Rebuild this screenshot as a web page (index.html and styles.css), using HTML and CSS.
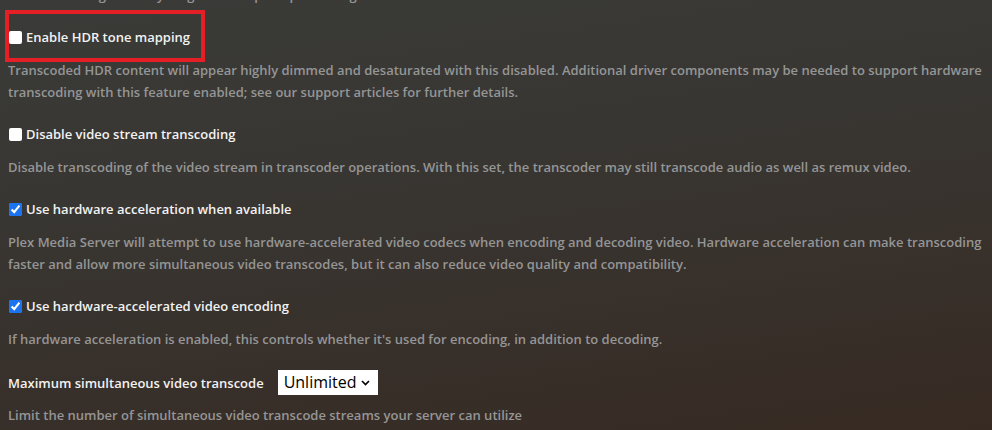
FILE: index.html
```html
<!DOCTYPE html>
<html lang="en">
<head>
<meta charset="utf-8">
<title>Transcoder settings</title>
<link rel="stylesheet" href="styles.css">
</head>
<body>
<div class="page">
  <p class="desc first">but will take significantly longer to complete processing.</p>

  <div class="setting">
    <div class="label-row highlighted">
      <input type="checkbox" id="hdr">
      <label for="hdr">Enable HDR tone mapping</label>
      <span class="annot"></span>
    </div>
    <p class="desc">Transcoded HDR content will appear highly dimmed and desaturated with this disabled. Additional driver components may be needed to support hardware transcoding with this feature enabled; see our support articles for further details.</p>
  </div>

  <div class="setting">
    <div class="label-row">
      <input type="checkbox" id="dvst">
      <label for="dvst">Disable video stream transcoding</label>
    </div>
    <p class="desc">Disable transcoding of the video stream in transcoder operations. With this set, the transcoder may still transcode audio as well as remux video.</p>
  </div>

  <div class="setting">
    <div class="label-row">
      <input type="checkbox" id="hwa" checked>
      <label for="hwa">Use hardware acceleration when available</label>
    </div>
    <p class="desc">Plex Media Server will attempt to use hardware-accelerated video codecs when encoding and decoding video. Hardware acceleration can make transcoding faster and allow more simultaneous video transcodes, but it can also reduce video quality and compatibility.</p>
  </div>

  <div class="setting">
    <div class="label-row">
      <input type="checkbox" id="hwe" checked>
      <label for="hwe">Use hardware-accelerated video encoding</label>
    </div>
    <p class="desc">If hardware acceleration is enabled, this controls whether it's used for encoding, in addition to decoding.</p>
  </div>

  <div class="setting">
    <div class="label-row select-row">
      <label class="plain" for="max">Maximum simultaneous video transcode</label>
      <span class="select-wrap">
        <select id="max">
          <option>Unlimited</option>
          <option>1</option>
          <option>2</option>
        </select>
        <svg class="chev" width="9" height="6" viewBox="0 0 9 6"><path d="M1 1 L4.5 4.5 L8 1" fill="none" stroke="#000" stroke-width="1.6"/></svg>
      </span>
    </div>
    <p class="desc">Limit the number of simultaneous video transcode streams your server can utilize</p>
  </div>
</div>
</body>
</html>
```

FILE: styles.css
```css
html, body {
  margin: 0;
  padding: 0;
  height: 100%;
}
body {
  background: linear-gradient(172deg, #3a3b38 0%, #383531 45%, #372a23 100%);
  font-family: "Open Sans", "Noto Sans", sans-serif;
  font-weight: 600;
  font-size: 13px;
  color: #eeeeee;
  overflow: hidden;
}
.page {
  padding: 0 8px;
}
.desc {
  margin: 0;
  line-height: 22px;
  color: #959595;
}
.desc.first {
  margin-top: -16px;
  margin-bottom: 20px;
}
.setting {
  margin-bottom: 20px;
}
.label-row {
  position: relative;
  display: flex;
  align-items: center;
  height: 22px;
  margin-bottom: 11px;
}
.label-row input[type="checkbox"] {
  width: 13px;
  height: 13px;
  margin: 0 4px 0 1px;
  accent-color: #1a73f0;
}
.label-row input[type="checkbox"]:not(:checked) {
  appearance: none;
  -webkit-appearance: none;
  background: #ffffff;
  border: none;
  border-radius: 2px;
}
.label-row label {
  color: #f2f2f2;
}
.annot {
  position: absolute;
  left: -3px;
  top: -16px;
  width: 192px;
  height: 44px;
  border: 4px solid #e51f26;
  pointer-events: none;
}
.select-row {
  height: 25px;
  margin-bottom: 9px;
}
.select-wrap {
  position: relative;
  margin-left: 14px;
  display: inline-flex;
}
.select-wrap select {
  appearance: none;
  -webkit-appearance: none;
  width: 100px;
  height: 25px;
  border: none;
  border-radius: 0;
  background: #ffffff;
  color: #000;
  font-family: "Open Sans", "Noto Sans", sans-serif;
  font-weight: 400;
  font-size: 16px;
  padding: 0 0 0 6px;
  line-height: 25px;
}
.chev {
  position: absolute;
  right: 8px;
  top: 10px;
  pointer-events: none;
}
```
